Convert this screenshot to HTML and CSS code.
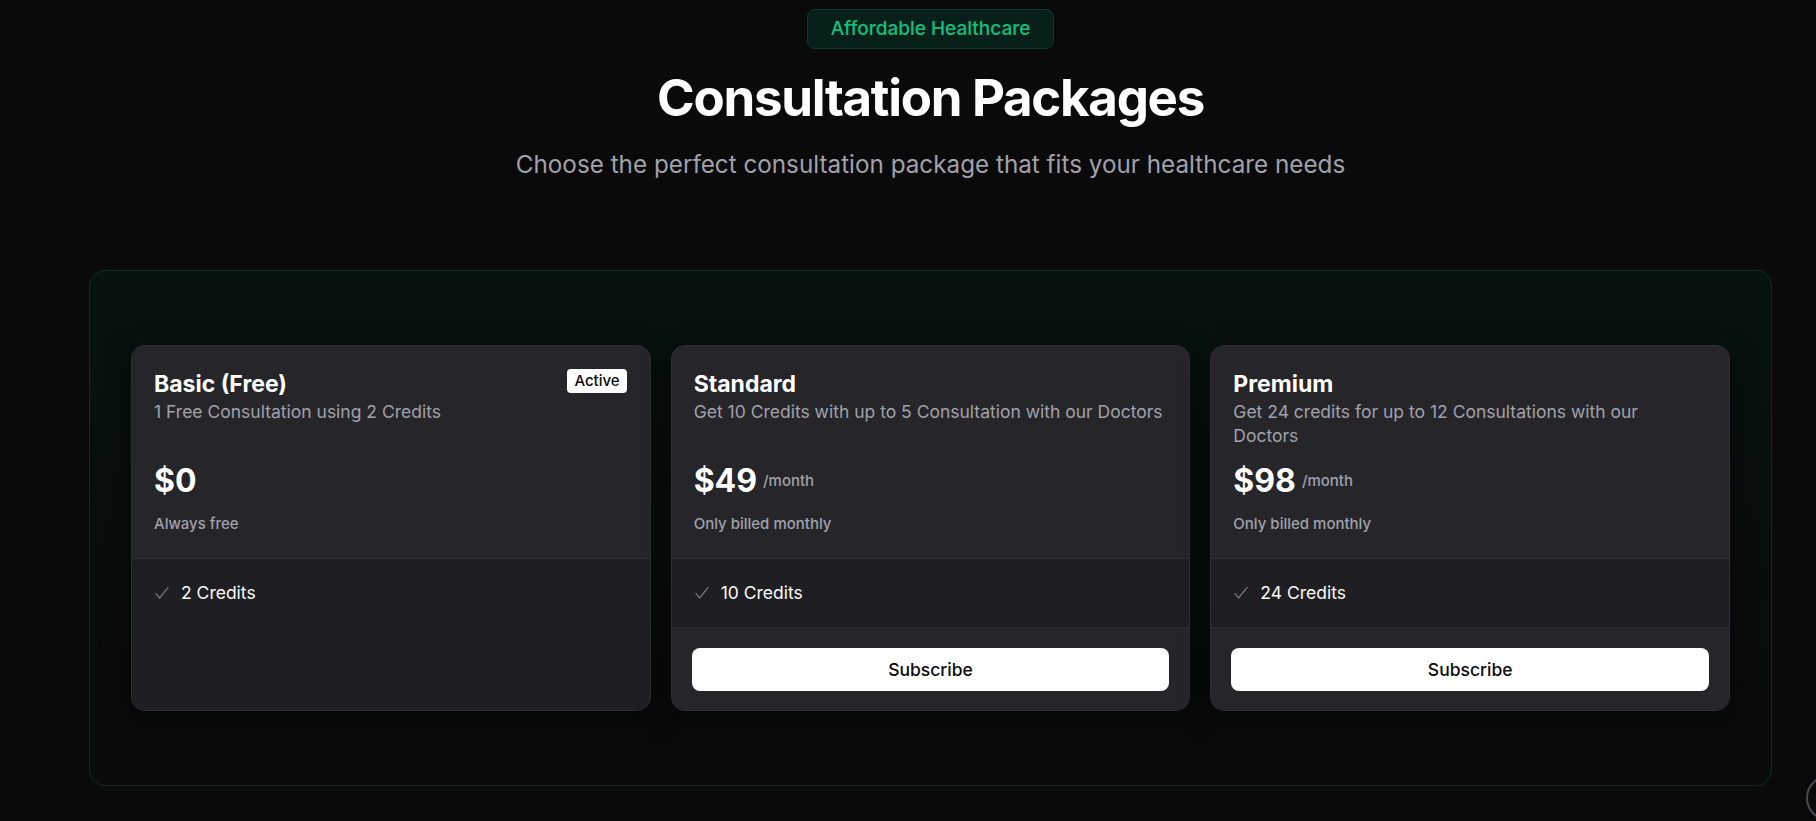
FILE: index.html
```html
<!DOCTYPE html>
<html lang="en">
<head>
<meta charset="utf-8">
<title>Consultation Packages</title>
<link rel="stylesheet" href="styles.css">
</head>
<body>
<main class="page">
  <header class="intro">
    <span class="tag">Affordable Healthcare</span>
    <h1 class="title">Consultation Packages</h1>
    <p class="subtitle">Choose the perfect consultation package that fits your healthcare needs</p>
  </header>

  <section class="panel">
    <div class="plans">
      <article class="plan">
        <div class="plan-head">
          <span class="active">Active</span>
          <h2 class="plan-name">Basic (Free)</h2>
          <p class="plan-desc">1 Free Consultation using 2 Credits</p>
          <div class="price-row"><span class="price">$0</span></div>
          <p class="note">Always free</p>
        </div>
        <ul class="features">
          <li class="feature"><svg class="check" viewBox="0 0 14 14" width="14" height="14"><polyline points="1,7.6 4.6,12 13,1.6" fill="none" stroke="#74747c" stroke-width="1.3" stroke-linecap="round" stroke-linejoin="round"/></svg><span>2 Credits</span></li>
        </ul>
      </article>

      <article class="plan">
        <div class="plan-head">
          <h2 class="plan-name">Standard</h2>
          <p class="plan-desc">Get 10 Credits with up to 5 Consultation with our Doctors</p>
          <div class="price-row"><span class="price">$49</span><span class="per">/month</span></div>
          <p class="note">Only billed monthly</p>
        </div>
        <ul class="features">
          <li class="feature"><svg class="check" viewBox="0 0 14 14" width="14" height="14"><polyline points="1,7.6 4.6,12 13,1.6" fill="none" stroke="#74747c" stroke-width="1.3" stroke-linecap="round" stroke-linejoin="round"/></svg><span>10 Credits</span></li>
        </ul>
        <div class="plan-foot"><button class="subscribe">Subscribe</button></div>
      </article>

      <article class="plan">
        <div class="plan-head">
          <h2 class="plan-name">Premium</h2>
          <p class="plan-desc">Get 24 credits for up to 12 Consultations with our<br>Doctors</p>
          <div class="price-row"><span class="price">$98</span><span class="per">/month</span></div>
          <p class="note">Only billed monthly</p>
        </div>
        <ul class="features">
          <li class="feature"><svg class="check" viewBox="0 0 14 14" width="14" height="14"><polyline points="1,7.6 4.6,12 13,1.6" fill="none" stroke="#74747c" stroke-width="1.3" stroke-linecap="round" stroke-linejoin="round"/></svg><span>24 Credits</span></li>
        </ul>
        <div class="plan-foot"><button class="subscribe">Subscribe</button></div>
      </article>
    </div>
  </section>
</main>
<div class="fab"></div>
</body>
</html>
```

FILE: styles.css
```css
* { box-sizing: border-box; }

html, body {
  margin: 0;
  background: #0a0a0a;
  overflow: hidden;
}

body {
  font-family: Inter, "Noto Sans", "Liberation Sans", sans-serif;
  color: #fafafa;
  height: 821px;
}

.page {
  width: 1683px;
  margin-left: 89px;
  padding-top: 9px;
}

.intro {
  display: flex;
  flex-direction: column;
  align-items: center;
}

.tag {
  display: inline-block;
  height: 40px;
  padding: 5px 23px;
  font-size: 19px;
  line-height: 28px;
  font-weight: 500;
  color: #10c07f;
  background: #07201a;
  border: 1px solid #0e3a2b;
  border-radius: 8px;
}

.title {
  margin: 19px 0 0;
  font-size: 51px;
  line-height: 60px;
  font-weight: 700;
  letter-spacing: -1.3px;
  color: #ffffff;
}

.subtitle {
  margin: 21px 0 0;
  font-size: 24.25px;
  line-height: 32px;
  color: #a1a1aa;
}

.panel {
  margin-top: 89px;
  height: 516px;
  padding: 74px 41px;
  border: 1px solid #0e2a21;
  border-radius: 16px;
  background: linear-gradient(180deg, #07130f 0%, #080f0d 40%, #0a0b0b 100%);
}

.plans {
  display: grid;
  grid-template-columns: repeat(3, 1fr);
  gap: 20px;
  height: 366px;
}

.plan {
  position: relative;
  display: flex;
  flex-direction: column;
  background: #26262a;
  border: 1px solid #2e2e33;
  border-radius: 14px;
  overflow: hidden;
  box-shadow: 0 8px 28px rgba(0, 0, 0, 0.55);
}

.plan-head {
  padding: 24px 16px 24px 22px;
}

.active {
  position: absolute;
  top: 23px;
  right: 23px;
  height: 24px;
  padding: 0 7px;
  font-size: 15px;
  line-height: 24px;
  font-weight: 500;
  color: #0a0a0a;
  background: #ffffff;
  border-radius: 4px;
}

.plan-name {
  margin: 0;
  font-size: 23px;
  line-height: 28px;
  font-weight: 700;
  color: #ffffff;
}

.plan-desc {
  margin: 2px 0 0;
  min-height: 48px;
  font-size: 17.5px;
  line-height: 24px;
  color: #a1a1aa;
}

.price-row {
  display: flex;
  align-items: center;
  gap: 6px;
  margin-top: 13px;
  height: 40px;
}

.price {
  font-size: 32px;
  line-height: 40px;
  font-weight: 700;
  color: #ffffff;
}

.per {
  font-size: 15px;
  line-height: 20px;
  font-weight: 500;
  color: #a1a1aa;
}

.note {
  margin: 13px 0 0;
  font-size: 15px;
  line-height: 20px;
  font-weight: 500;
  color: #a1a1aa;
}

.features {
  flex: 1;
  margin: 0;
  list-style: none;
  padding: 22px 22px 22px;
  background: #1f1f23;
  border-top: 1px solid #2e2e33;
}

.feature {
  display: flex;
  align-items: center;
  gap: 12px;
  font-size: 17.5px;
  line-height: 24px;
  color: #fafafa;
}

.check {
  flex: none;
  margin-left: 1px;
}

.plans .plan:not(:first-child) .features {
  flex: none;
}

.plan-foot {
  flex: 1;
  padding: 20px 20px 20px;
  border-top: 1px solid #2e2e33;
  background: #26262a;
}

.subscribe {
  display: block;
  width: 100%;
  height: 43px;
  border: 0;
  border-radius: 8px;
  background: #ffffff;
  color: #0a0a0a;
  font-family: inherit;
  font-size: 17.5px;
  font-weight: 500;
}

.fab {
  position: fixed;
  left: 1806px;
  top: 775px;
  width: 46px;
  height: 46px;
  border-radius: 50%;
  border: 2px solid #4a4a4f;
  background: #0a0a0a;
}
```
